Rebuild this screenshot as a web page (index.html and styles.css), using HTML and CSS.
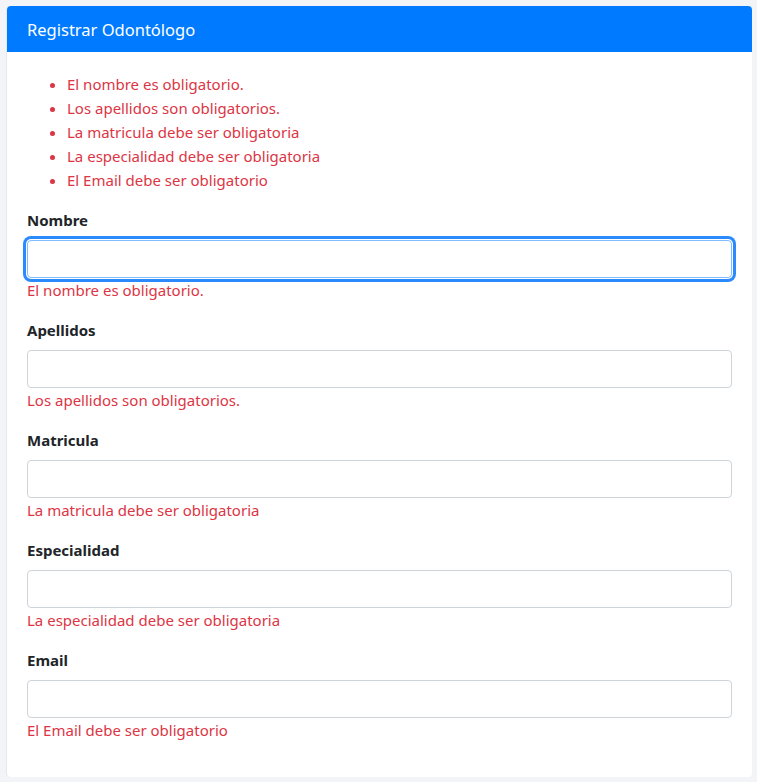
FILE: index.html
```html
<!DOCTYPE html>
<html lang="es">
<head>
<meta charset="utf-8">
<title>Registrar Odontólogo</title>
<link rel="stylesheet" href="styles.css">
</head>
<body>
<div class="card">
  <div class="card-header">Registrar Odontólogo</div>
  <div class="card-body">
    <ul class="errors">
      <li>El nombre es obligatorio.</li>
      <li>Los apellidos son obligatorios.</li>
      <li>La matricula debe ser obligatoria</li>
      <li>La especialidad debe ser obligatoria</li>
      <li>El Email debe ser obligatorio</li>
    </ul>
    <div class="group">
      <label class="label" for="nombre">Nombre</label>
      <input class="input focused" id="nombre" type="text">
      <div class="feedback">El nombre es obligatorio.</div>
    </div>
    <div class="group">
      <label class="label" for="apellidos">Apellidos</label>
      <input class="input" id="apellidos" type="text">
      <div class="feedback">Los apellidos son obligatorios.</div>
    </div>
    <div class="group">
      <label class="label" for="matricula">Matricula</label>
      <input class="input" id="matricula" type="text">
      <div class="feedback">La matricula debe ser obligatoria</div>
    </div>
    <div class="group">
      <label class="label" for="especialidad">Especialidad</label>
      <input class="input" id="especialidad" type="text">
      <div class="feedback">La especialidad debe ser obligatoria</div>
    </div>
    <div class="group">
      <label class="label" for="email">Email</label>
      <input class="input" id="email" type="email">
      <div class="feedback">El Email debe ser obligatorio</div>
    </div>
  </div>
</div>
</body>
</html>
```
FILE: styles.css
```css
* { box-sizing: border-box; }
html, body { height: 100%; }
body {
  margin: 0;
  padding: 6px 5px 0 7px;
  background: #f3f4f8;
  font-family: "Noto Sans", "Open Sans", sans-serif;
  font-size: 15px;
  line-height: 24px;
  color: #212529;
  overflow: hidden;
}
.card {
  background: #fff;
  border-radius: 4px;
  box-shadow: -1px 0 0 #e6e8ee;
}
.card-header {
  background: #007bff;
  color: #fff;
  border-radius: 4px 4px 0 0;
  padding: 12px 20px 11px;
  font-size: 16.5px;
  line-height: 23px;
}
.card-body {
  padding: 20px 20px 19px;
}
.errors {
  margin: 0 0 16px;
  padding-left: 40px;
  color: #dc3545;
}
.group {
  margin-bottom: 16px;
}
.label {
  display: block;
  font-weight: 700;
  margin-bottom: 8px;
}
.input {
  display: block;
  width: 100%;
  height: 38px;
  border: 1px solid #ced4da;
  border-radius: 4px;
  background: #fff;
  font: inherit;
  padding: 6px 12px;
  outline: none;
}
.input.focused {
  border-color: #80bdff;
  box-shadow: 0 0 0 1px #fff, 0 0 0 4px #2a8afe;
}
.feedback {
  color: #dc3545;
}
```
